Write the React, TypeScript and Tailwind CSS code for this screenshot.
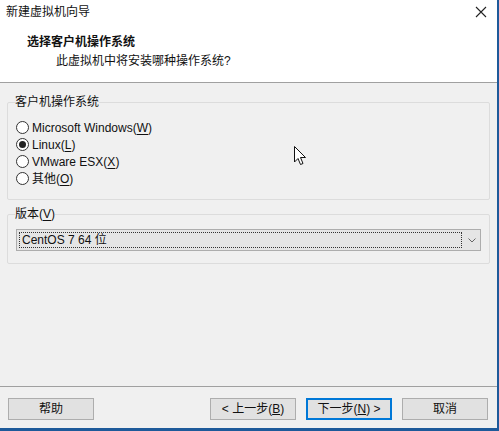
import { useState } from "react";

const ui = { fontFamily: '"Liberation Sans", "Noto Sans CJK SC", sans-serif' };

function Radio({ checked, label, mnemonic }: { checked?: boolean; label: string; mnemonic: string }) {
  return (
    <div className="flex h-[17px] items-center gap-[3px]">
      <span className="flex h-[13px] w-[13px] items-center justify-center rounded-full border border-[#333] bg-white">
        {checked && <span className="h-[7px] w-[7px] rounded-full bg-[#222]" />}
      </span>
      <span>
        {label}(<span className="underline underline-offset-2">{mnemonic}</span>)
      </span>
    </div>
  );
}

function Button({ children, primary }: { children: React.ReactNode; primary?: boolean }) {
  return (
    <button
      className={
        "flex h-[22px] w-[86px] items-center justify-center border bg-[#e1e1e1] text-[12px] text-[#111] " +
        (primary ? "border-[#0078d7] shadow-[inset_0_0_0_1px_#0078d7]" : "border-[#adadad]")
      }
    >
      {children}
    </button>
  );
}

export default function App() {
  const [os] = useState("linux");

  return (
    <div
      className="flex h-[431px] w-[499px] flex-col border-r-2 border-b-[3px] border-[#1e5a9a] bg-[#f0f0f0] text-[12px] text-[#111]"
      style={ui}
    >
      <div className="h-[83px] border-b border-[#a0a0a0] bg-white">
        <div className="flex h-[24px] items-center justify-between pl-[6px] pr-[10px]">
          <span>新建虚拟机向导</span>
          <svg width="12" height="12" viewBox="0 0 12 12" className="stroke-[#222]">
            <path d="M1 1L11 11M11 1L1 11" strokeWidth="1.1" />
          </svg>
        </div>
        <div className="pl-[27px] pt-[9px] font-bold">选择客户机操作系统</div>
        <div className="pl-[56px] pt-[1px]">此虚拟机中将安装哪种操作系统?</div>
      </div>

      <div className="relative flex-1 px-[7px] pt-[10px]">
        <fieldset className="rounded-[2px] border border-[#dcdcdc] px-[8px] pb-[12px] pt-0">
          <legend className="-ml-[1px] px-0 text-[12px]">客户机操作系统</legend>
          <div className="mt-[8px] flex flex-col">
            <Radio label="Microsoft Windows" mnemonic="W" checked={os === "win"} />
            <Radio label="Linux" mnemonic="L" checked={os === "linux"} />
            <Radio label="VMware ESX" mnemonic="X" checked={os === "esx"} />
            <Radio label="其他" mnemonic="O" checked={os === "other"} />
          </div>
        </fieldset>

        <fieldset className="mt-[5px] rounded-[2px] border border-[#dcdcdc] px-[8px] pb-[12px] pt-0">
          <legend className="-ml-[1px] px-0">
            版本(<span className="underline underline-offset-2">V</span>)
          </legend>
          <div className="mt-[6px] flex h-[22px] border border-[#adadad] bg-[#e5e5e5]">
            <div className="m-[2px] flex flex-1 items-center border border-dotted border-[#333] pl-[2px]">
              CentOS 7 64 位
            </div>
            <div className="flex w-[16px] items-center justify-center">
              <svg width="8" height="5" viewBox="0 0 8 5" className="fill-none stroke-[#666]">
                <path d="M0.5 0.5L4 4L7.5 0.5" />
              </svg>
            </div>
          </div>
        </fieldset>

        {/* mouse pointer */}
        <svg width="13" height="20" viewBox="0 0 13 20" className="absolute left-[294px] top-[63px]">
          <path d="M0.5 0.5V16L4 12.5L6.5 18.5L9 17.5L6.5 11.5H11.5Z" fill="white" stroke="#111" strokeWidth="1" />
        </svg>
      </div>

      <div className="flex h-[42px] items-start border-t border-[#a0a0a0] pl-[8px] pr-[9px] pt-[11px]">
        <Button>帮助</Button>
        <div className="ml-auto flex gap-[10px]">
          <Button>&lt; 上一步(<span className="underline">B</span>)</Button>
          <Button primary>
            下一步(<span className="underline">N</span>) &gt;
          </Button>
          <Button>取消</Button>
        </div>
      </div>
    </div>
  );
}
